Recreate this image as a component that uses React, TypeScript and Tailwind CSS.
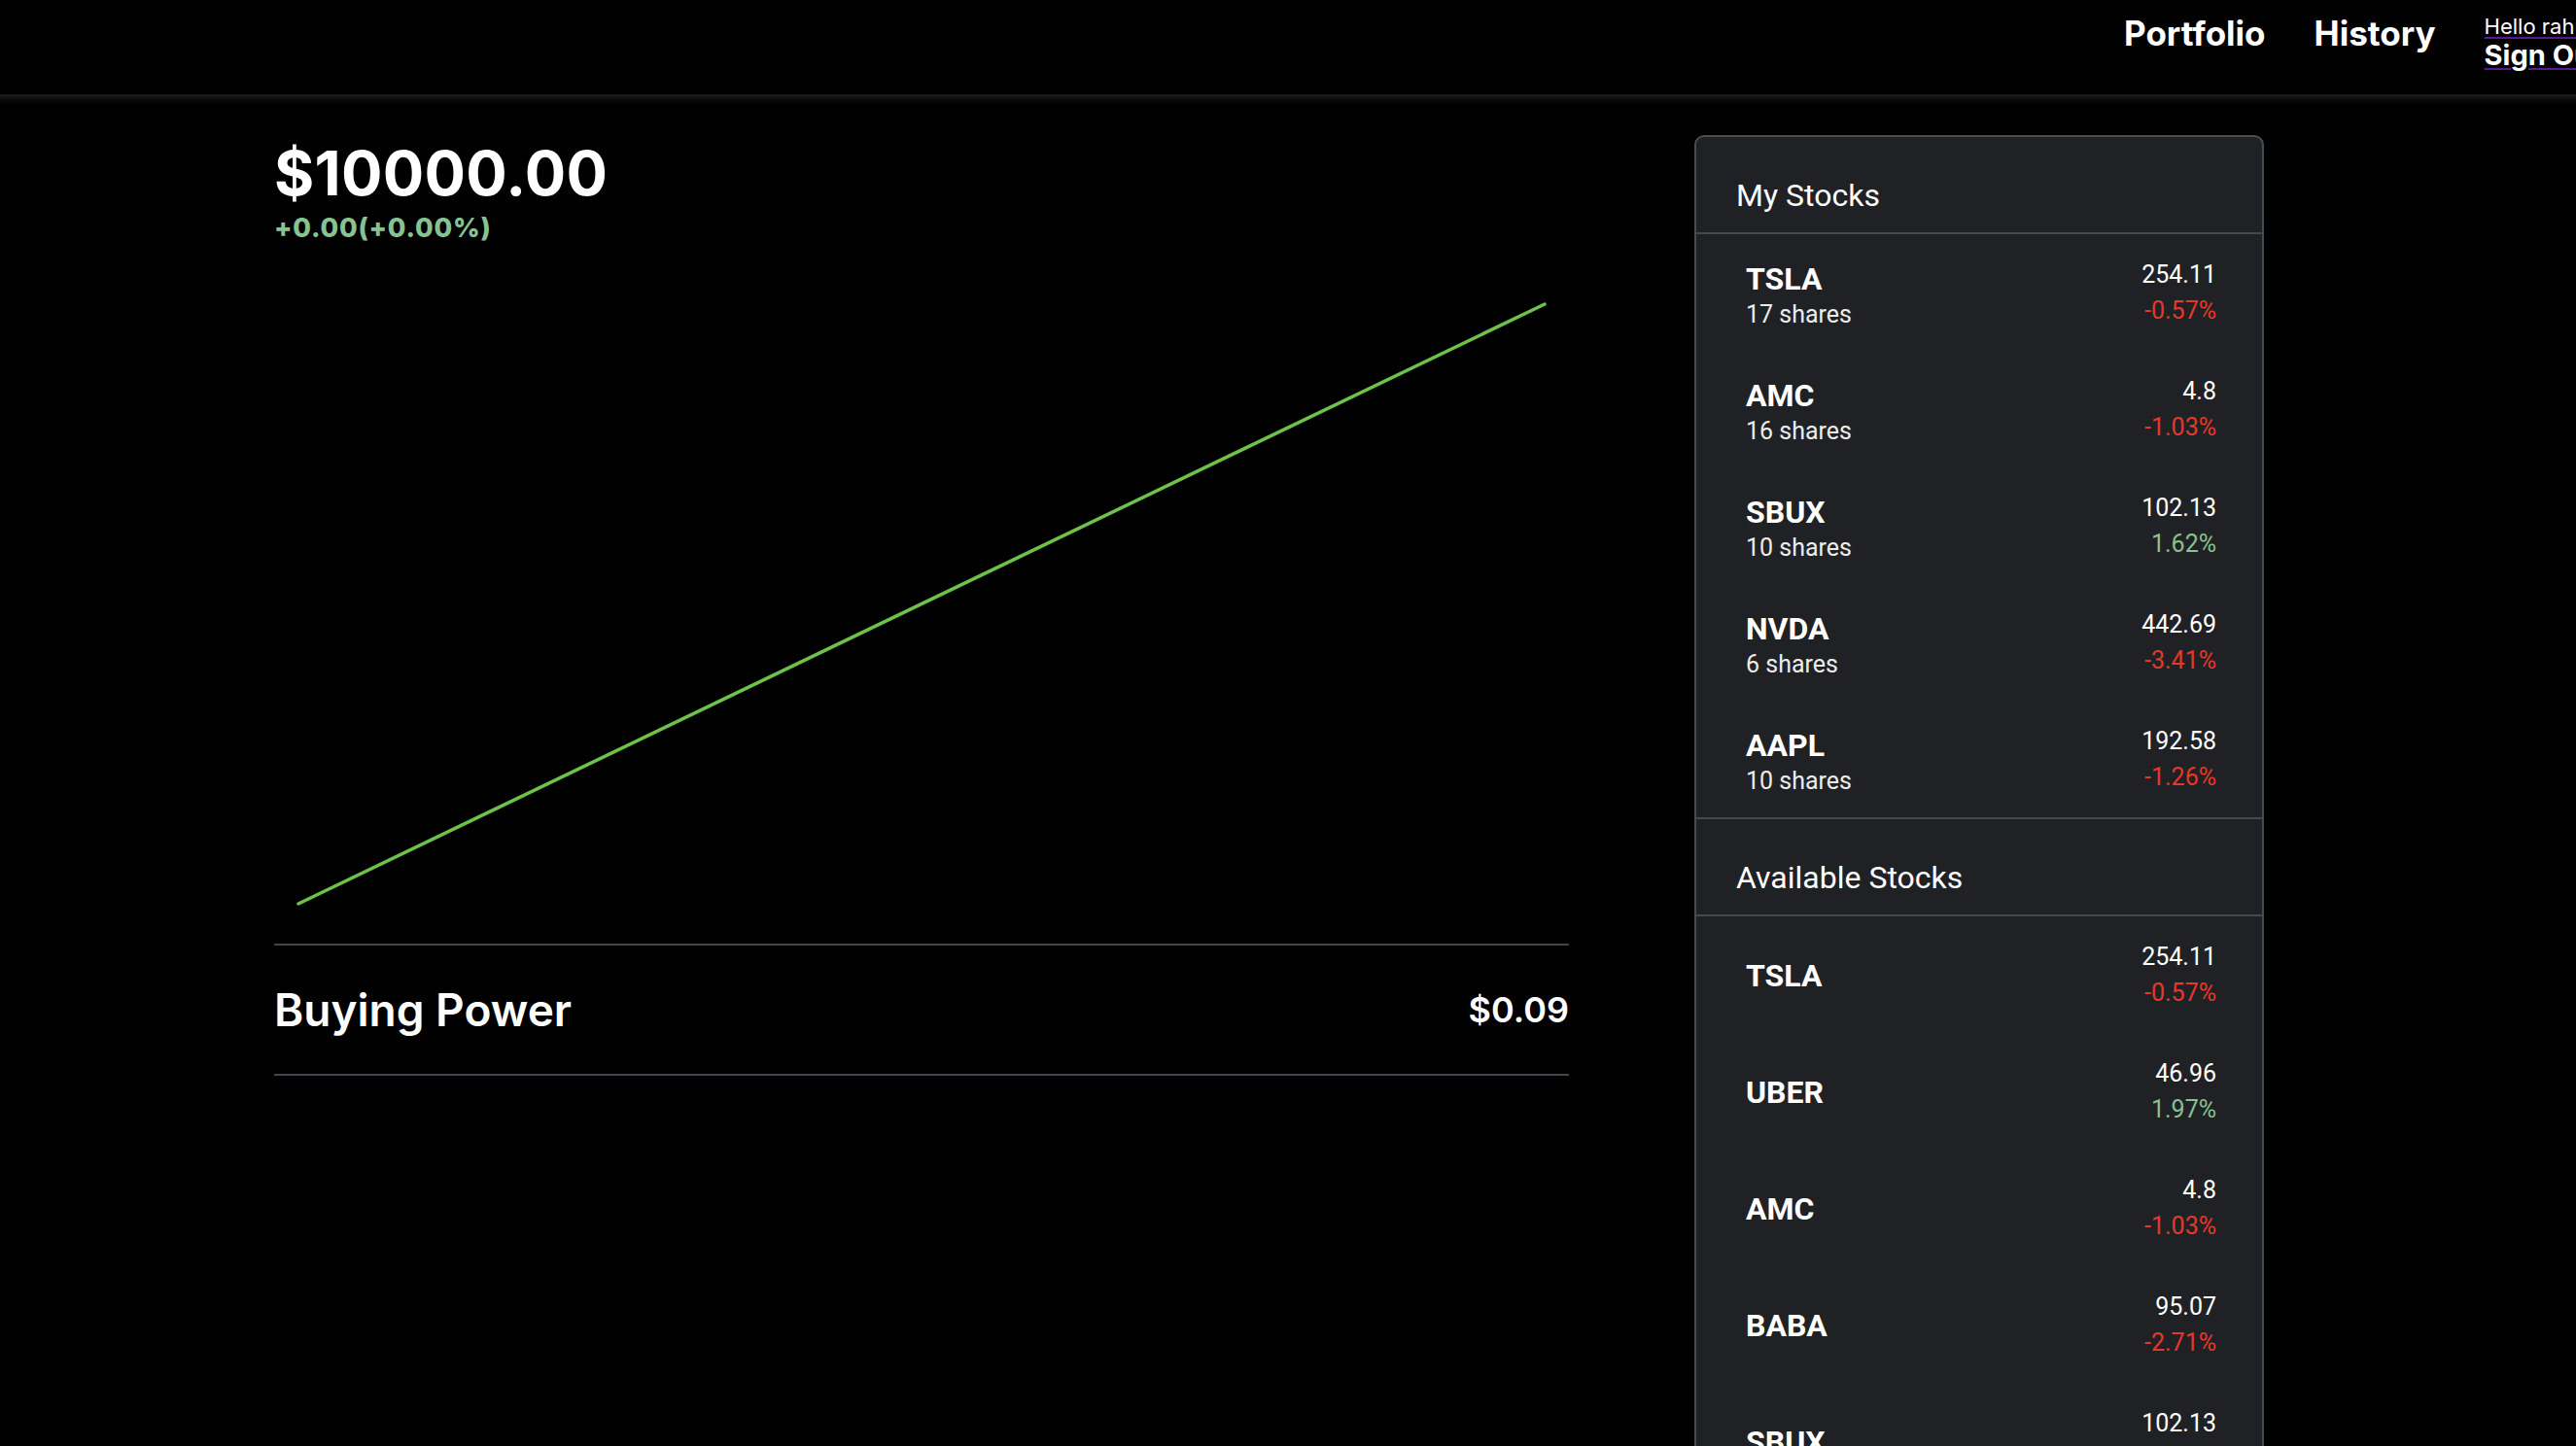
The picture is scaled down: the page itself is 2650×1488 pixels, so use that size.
import React from "react";

type Stock = {
  symbol: string;
  price: string;
  change: number;
  shares?: number;
};

const myStocks: Stock[] = [
  { symbol: "TSLA", price: "254.11", change: -0.57, shares: 17 },
  { symbol: "AMC", price: "4.8", change: -1.03, shares: 16 },
  { symbol: "SBUX", price: "102.13", change: 1.62, shares: 10 },
  { symbol: "NVDA", price: "442.69", change: -3.41, shares: 6 },
  { symbol: "AAPL", price: "192.58", change: -1.26, shares: 10 },
];

const availableStocks: Stock[] = [
  { symbol: "TSLA", price: "254.11", change: -0.57 },
  { symbol: "UBER", price: "46.96", change: 1.97 },
  { symbol: "AMC", price: "4.8", change: -1.03 },
  { symbol: "BABA", price: "95.07", change: -2.71 },
  { symbol: "SBUX", price: "102.13", change: 1.62 },
  { symbol: "NVDA", price: "442.69", change: -3.41 },
  { symbol: "AAPL", price: "192.58", change: -1.26 },
];

function Header() {
  return (
    <header className="flex h-[97px] items-start overflow-hidden bg-black pl-[2185px] font-['Inter',sans-serif] text-white">
      <a className="mt-[17px] text-[35px] font-bold leading-[35px]">Portfolio</a>
      <a className="ml-[50px] mt-[17px] text-[35px] font-bold leading-[35px]">History</a>
      <div className="ml-[50px] mt-[17px] flex shrink-0 flex-col whitespace-nowrap">
        <a className="text-[22px] leading-[21px] underline decoration-[#551a8b] decoration-2 underline-offset-[3px]">
          Hello rahul
        </a>
        <a className="mt-[5px] text-[29px] font-bold leading-[28px] underline decoration-[#551a8b] decoration-2 underline-offset-[3px]">
          Sign Out
        </a>
      </div>
    </header>
  );
}

function Chart() {
  return (
    <svg width="1332" height="719" viewBox="0 0 1332 719" className="mt-[4px] block">
      <line x1="25" y1="678" x2="1307" y2="61" stroke="#6cc24a" strokeWidth="3.5" strokeLinecap="round" />
    </svg>
  );
}

function StockRow({ stock }: { stock: Stock }) {
  const up = stock.change >= 0;
  return (
    <div className="flex h-[120px] items-center justify-between pl-[51px] pr-[47px]">
      <div className="mt-[2px] flex flex-col">
        <span className="text-[32px] font-bold leading-[44px] text-white">{stock.symbol}</span>
        {stock.shares !== undefined && (
          <span className="text-[25px] leading-[30px] text-[#ececec]">{stock.shares} shares</span>
        )}
      </div>
      <div className="flex flex-col items-end">
        <span className="text-[25px] leading-[37px] text-white">{stock.price}</span>
        <span className={`text-[25px] leading-[37px] ${up ? "text-[#88c291]" : "text-[#e4382b]"}`}>
          {stock.change.toFixed(2)}%
        </span>
      </div>
    </div>
  );
}

function StocksPanel() {
  return (
    <aside className="w-[586px] shrink-0 self-start rounded-[10px] border-2 border-[#4a4d52] bg-[#202125] font-['Roboto',sans-serif] text-white">
      <div className="border-b-2 border-[#45484d] pb-[22px] pl-[41px] pt-[44px] text-[32px] leading-[32px]">My Stocks</div>
      {myStocks.map((s) => (
        <StockRow key={"my-" + s.symbol} stock={s} />
      ))}
      <div className="border-y-2 border-[#45484d] pb-[22px] pl-[41px] pt-[44px] text-[32px] leading-[32px]">
        Available Stocks
      </div>
      {availableStocks.map((s) => (
        <StockRow key={"av-" + s.symbol} stock={s} />
      ))}
    </aside>
  );
}

export default function App() {
  return (
    <div className="min-h-screen w-full overflow-hidden bg-black">
      <Header />
      <div className="h-[15px] bg-linear-to-b from-[#1e1e1e] to-black" />
      <main className="flex gap-[129px] pl-[282px] pt-[27px]">
        <section className="w-[1332px] shrink-0 pt-[8px] font-['Inter',sans-serif] text-white">
          <div className="text-[63px] font-bold leading-[63px] tracking-[0.3px]">$10000.00</div>
          <div className="mt-[11px] text-[27px] font-extrabold leading-[27px] tracking-[0.8px] text-[#88c291]">
            +0.00(+0.00%)
          </div>
          <Chart />
          <div className="flex h-[136px] items-center justify-between border-y-2 border-[#42474f]">
            <span className="text-[46px] font-semibold">Buying Power</span>
            <span className="text-[36px] font-semibold">$0.09</span>
          </div>
        </section>
        <StocksPanel />
      </main>
    </div>
  );
}
